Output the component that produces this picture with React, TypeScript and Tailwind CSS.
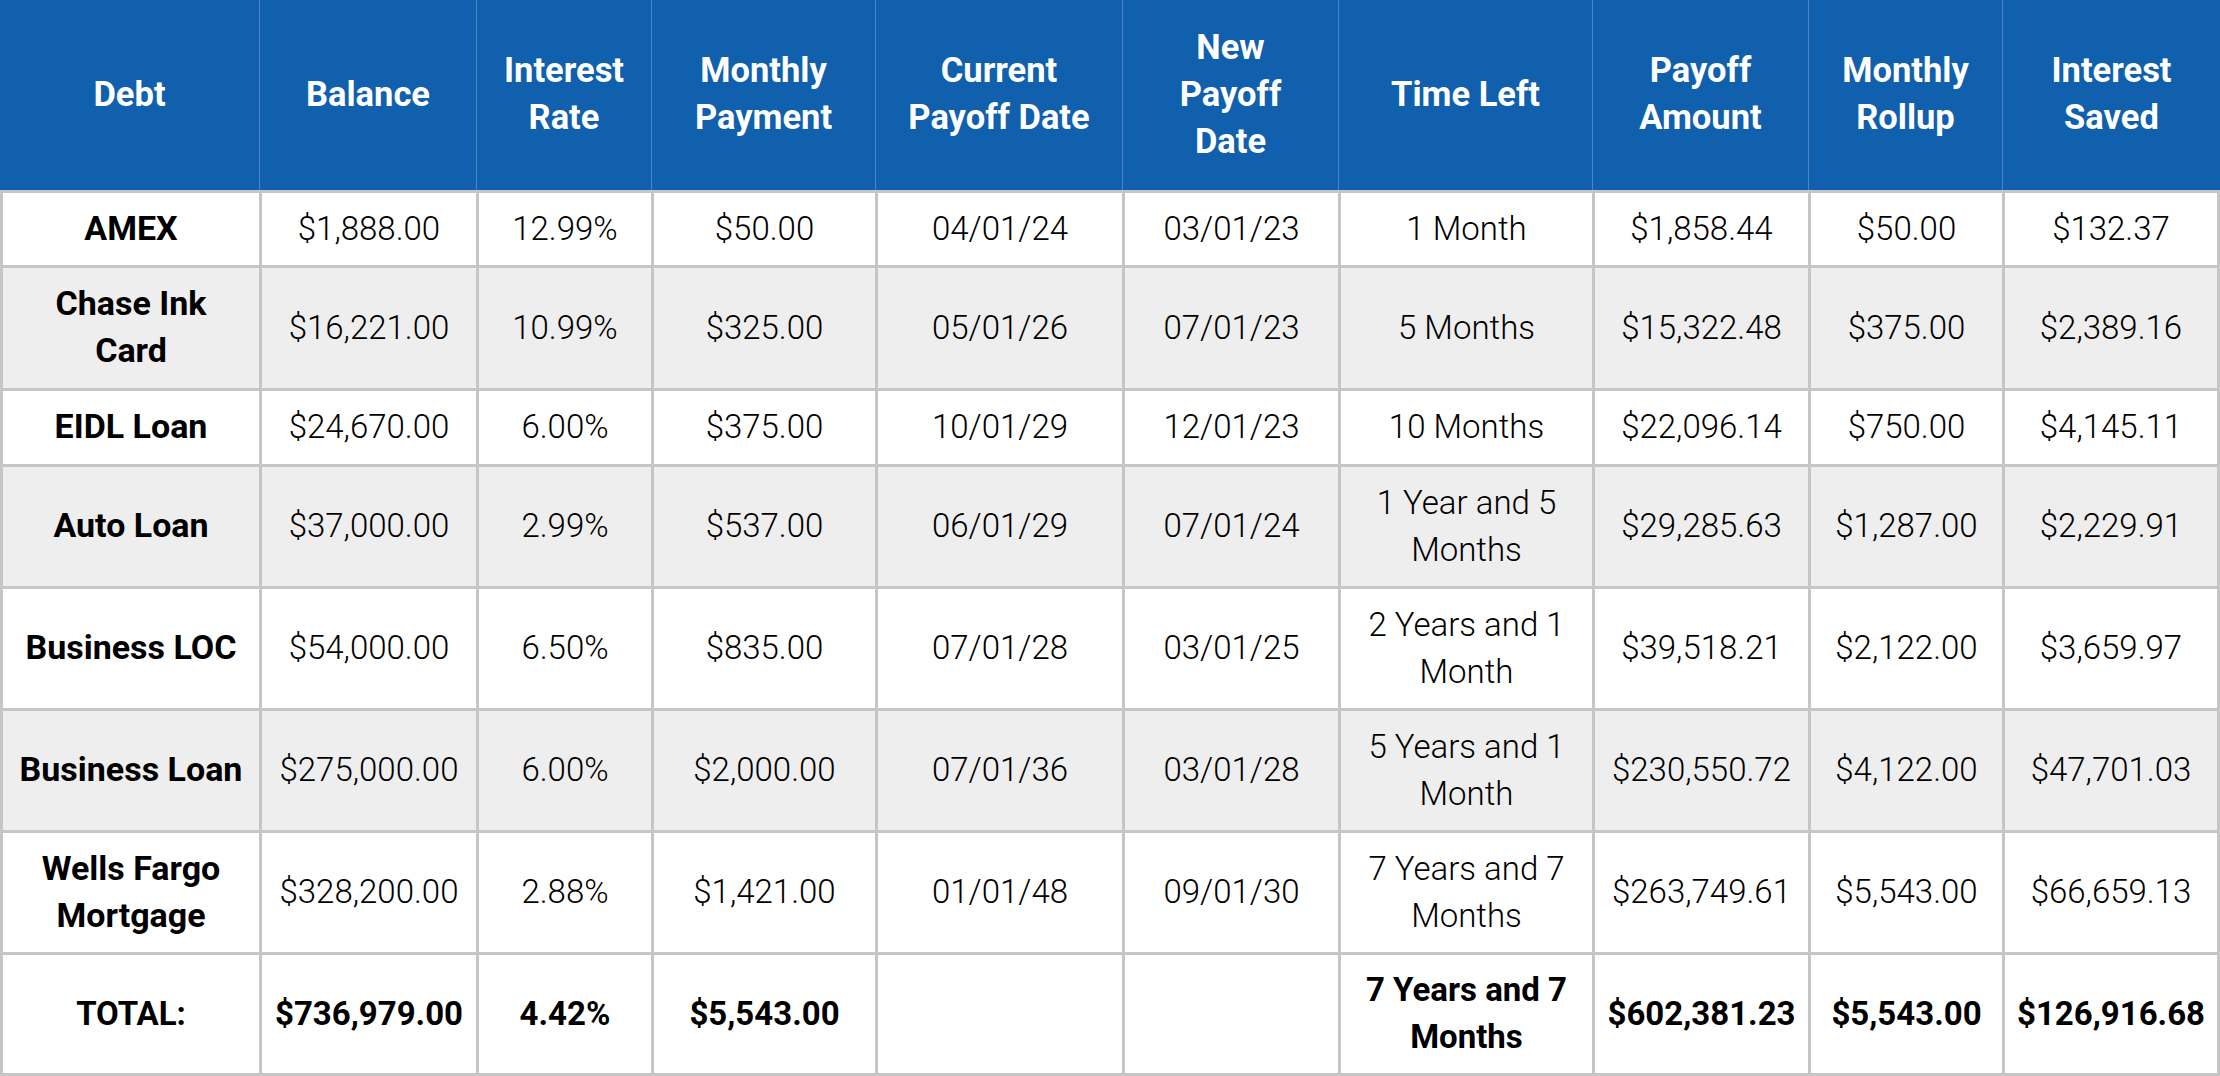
import React from "react";

const headers = [
  "Debt",
  "Balance",
  "Interest\nRate",
  "Monthly\nPayment",
  "Current\nPayoff Date",
  "New\nPayoff\nDate",
  "Time Left",
  "Payoff\nAmount",
  "Monthly\nRollup",
  "Interest\nSaved",
];

const rows: string[][] = [
  ["AMEX", "$1,888.00", "12.99%", "$50.00", "04/01/24", "03/01/23", "1 Month", "$1,858.44", "$50.00", "$132.37"],
  ["Chase Ink\nCard", "$16,221.00", "10.99%", "$325.00", "05/01/26", "07/01/23", "5 Months", "$15,322.48", "$375.00", "$2,389.16"],
  ["EIDL Loan", "$24,670.00", "6.00%", "$375.00", "10/01/29", "12/01/23", "10 Months", "$22,096.14", "$750.00", "$4,145.11"],
  ["Auto Loan", "$37,000.00", "2.99%", "$537.00", "06/01/29", "07/01/24", "1 Year and 5\nMonths", "$29,285.63", "$1,287.00", "$2,229.91"],
  ["Business LOC", "$54,000.00", "6.50%", "$835.00", "07/01/28", "03/01/25", "2 Years and 1\nMonth", "$39,518.21", "$2,122.00", "$3,659.97"],
  ["Business Loan", "$275,000.00", "6.00%", "$2,000.00", "07/01/36", "03/01/28", "5 Years and 1\nMonth", "$230,550.72", "$4,122.00", "$47,701.03"],
  ["Wells Fargo\nMortgage", "$328,200.00", "2.88%", "$1,421.00", "01/01/48", "09/01/30", "7 Years and 7\nMonths", "$263,749.61", "$5,543.00", "$66,659.13"],
];

const total = ["TOTAL:", "$736,979.00", "4.42%", "$5,543.00", "", "", "7 Years and 7\nMonths", "$602,381.23", "$5,543.00", "$126,916.68"];

const App: React.FC = () => {
  return (
    <div className="w-[2220px] h-[1076px] bg-white text-black font-['Roboto',sans-serif] overflow-hidden">
      {/* header */}
      <div className="grid grid-cols-[259px_217px_175px_224px_247px_216px_254px_216px_194px_218px] h-[190px] bg-[#1060ae] text-white">
        {headers.map((h, i) => (
          <div
            key={i}
            className={
              "flex items-center justify-center text-center whitespace-pre-line font-bold text-[34.5px] leading-[47px] pb-[2px] " +
              (i > 0 ? "border-l border-[#4b87c5]" : "")
            }
          >
            {h}
          </div>
        ))}
      </div>

      {/* body */}
      <div className="grid grid-cols-[256px_214px_172px_221px_244px_213px_251px_213px_191px_212px] grid-rows-[72px_120px_73px_119px_119px_119px_119px_118px] gap-[3px] p-[3px] bg-[#c6c6c6]">
        {rows.map((r, ri) =>
          r.map((c, ci) => (
            <div
              key={ri + "-" + ci}
              className={
                "flex items-center justify-center text-center whitespace-pre-line leading-[47px] pb-[2px] " +
                (ri % 2 === 1 ? "bg-[#eeeeee] " : "bg-white ") +
                (ci === 0 ? "font-bold text-[34px]" : "font-light text-[33px]")
              }
            >
              {c}
            </div>
          ))
        )}
        {total.map((c, ci) => (
          <div
            key={"t-" + ci}
            className="flex items-center justify-center text-center whitespace-pre-line leading-[47px] pb-[2px] bg-white font-bold text-[33px]"
          >
            {c}
          </div>
        ))}
      </div>
    </div>
  );
};

export default App;
